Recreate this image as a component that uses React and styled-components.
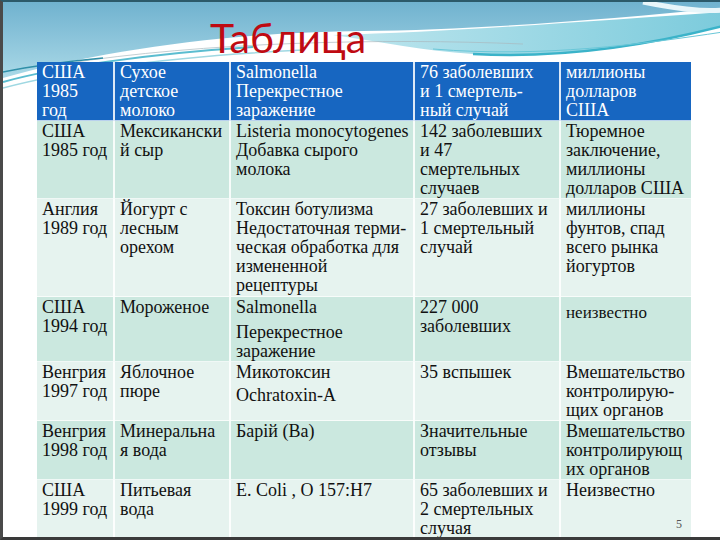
import React from 'react';
import styled, { createGlobalStyle } from 'styled-components';

const Global = createGlobalStyle`
  html, body { margin: 0; padding: 0; background: #fff; }
`

const Slide = styled.div`
  position: relative;
  width: 720px;
  height: 540px;
  box-sizing: border-box;
  background: #fff;
  border-top: 2px solid #2c5a6a;
  border-left: 3px solid #4a4a4a;
  border-bottom: 3px solid #3a3a3a;
  overflow: hidden;
`

const Wave = styled.svg`
  position: absolute;
  top: 0;
  left: 0;
  width: 720px;
  height: 90px;
`

const Title = styled.h1`
  position: relative;
  margin: 0;
  padding: 15px 0 0 207px;
  height: 42px;
  font-family: Lato, "Liberation Sans", sans-serif;
  font-weight: 400;
  font-size: 41px;
  line-height: 42px;
  color: #bf0a12;
`

const Table = styled.table`
  position: relative;
  margin: 3px 0 0 34px;
  width: 654px;
  table-layout: fixed;
  border-collapse: collapse;
  font-family: "Liberation Serif", "Times New Roman", serif;
  font-size: 18px;
  line-height: 19px;
  color: #111;
`

const Row = styled.tr`
  height: ${p => p.h}px;
  background: ${p => (p.head ? '#1766c1' : p.alt ? '#e6f3ef' : '#cbe8df')};
  color: ${p => (p.head ? '#fff' : '#111')};
`

const Cell = styled.td`
  vertical-align: top;
  padding: 1px 0 0 5px;
  border-right: 2px solid rgba(255, 255, 255, 0.85);
  border-bottom: 1px solid rgba(255, 255, 255, 0.7);
  white-space: nowrap;
  overflow: visible;
  &:last-child { border-right: none; }
`

const Para = styled.div`
  margin-top: ${p => p.gap || 0}px;
`

const Small = styled.div`
  margin-top: 5px;
  font-size: 17px;
`

const PageNum = styled.div`
  position: absolute;
  right: 38px;
  bottom: 5px;
  font-family: "Liberation Serif", serif;
  font-size: 12px;
  color: #555;
`

const rows = [
  { h: 56, head: true, cells: [
    ['США', '1985', 'год'],
    ['Сухое', 'детское', 'молоко'],
    ['Salmonella', 'Перекрестное', 'заражение'],
    ['76 заболевших', 'и 1 смертель-', 'ный случай'],
    ['миллионы', 'долларов', 'США'],
  ]},
  { h: 77, cells: [
    ['США', '1985 год'],
    ['Мексикански', 'й сыр'],
    ['Listeria monocytogenes', 'Добавка сырого', 'молока'],
    ['142 заболевших', 'и 47', 'смертельных', 'случаев'],
    ['Тюремное', 'заключение,', 'миллионы', 'долларов США'],
  ]},
  { h: 98, alt: true, cells: [
    ['Англия', '1989 год'],
    ['Йогурт с', 'лесным', 'орехом'],
    ['Токсин ботулизма', 'Недостаточная терми-', 'ческая обработка для', 'измененной', 'рецептуры'],
    ['27 заболевших и', '1 смертельный', 'случай'],
    ['миллионы', 'фунтов, спад', 'всего рынка', 'йогуртов'],
  ]},
  { h: 61, cells: [
    ['США', '1994 год'],
    ['Мороженое'],
    { paras: [['Salmonella'], ['Перекрестное', 'заражение']], gap: 6 },
    ['227 000', 'заболевших'],
    { small: 'неизвестно' },
  ]},
  { h: 59, alt: true, cells: [
    ['Венгрия', '1997 год'],
    ['Яблочное', 'пюре'],
    { paras: [['Микотоксин'], ['Ochratoxin-A']], gap: 4 },
    ['35 вспышек'],
    ['Вмешательство', 'контролирую-', 'щих органов'],
  ]},
  { h: 57, cells: [
    ['Венгрия', '1998 год'],
    ['Минеральна', 'я вода'],
    ['Барій (Ba)'],
    ['Значительные', 'отзывы'],
    ['Вмешательство', 'контролирующ', 'их органов'],
  ]},
  { h: 58, alt: true, cells: [
    ['США', '1999 год'],
    ['Питьевая', 'вода'],
    ['E. Coli , O 157:H7'],
    ['65 заболевших и', '2 смертельных', 'случая'],
    ['Неизвестно'],
  ]},
];

const colWidths = [77, 116, 184, 146, 131];

const Lines = ({ lines }) => lines.map((l, i) => <div key={i}>{l}</div>);

const renderCell = (c) => {
  if (Array.isArray(c)) return <Lines lines={c} />;
  if (c.small) return <Small>{c.small}</Small>;
  return c.paras.map((p, i) => (
    <Para key={i} gap={i ? c.gap : 0}><Lines lines={p} /></Para>
  ));
};

const WaveArt = () => (
  <Wave viewBox="0 0 720 90">
    <defs>
      <linearGradient id="sky" x1="0" y1="0" x2="0" y2="1">
        <stop offset="0" stopColor="#70b2cf" />
        <stop offset="1" stopColor="#aad9e7" />
      </linearGradient>
      <linearGradient id="band" x1="0" y1="0" x2="1" y2="0">
        <stop offset="0" stopColor="#bfe6ee" />
        <stop offset="1" stopColor="#7ccbdc" />
      </linearGradient>
    </defs>
    <path d="M0,0 H720 V6 C600,18 470,28 360,29 C230,30 100,48 0,76 Z" fill="url(#sky)" />
    <path d="M330,33 C450,30 600,18 720,10 V24 C640,46 560,56 470,52 C420,49 380,40 330,33 Z" fill="url(#band)" />
    <path d="M640,0 C670,6 700,10 720,8" stroke="#e8f6fa" strokeWidth="5" fill="none" />
    <path d="M470,52 C560,57 650,42 720,24" stroke="#3bb3c9" strokeWidth="2.5" fill="none" />
    <path d="M430,47 C540,56 640,42 720,30" stroke="#69c7d8" strokeWidth="1" fill="none" />
    <path d="M0,80 C50,66 140,52 250,45" stroke="#5bbdd0" strokeWidth="2" fill="none" />
    <path d="M0,86 C60,70 160,55 300,48" stroke="#9fd8e2" strokeWidth="1.5" fill="none" />
    <path d="M60,62 C200,40 380,36 520,42" stroke="#a9b9bf" strokeWidth="1" fill="none" opacity="0.7" />
    <path d="M0,70 C30,64 60,60 100,56" stroke="#2f8fa8" strokeWidth="1.5" fill="none" />
  </Wave>
);

const App = () => (
  <>
    <Global />
    <Slide>
      <WaveArt />
      <Title>Таблица</Title>
      <Table>
        <colgroup>
          {colWidths.map((w, i) => <col key={i} style={{ width: w }} />)}
        </colgroup>
        <tbody>
          {rows.map((r, i) => (
            <Row key={i} h={r.h} head={r.head} alt={r.alt}>
              {r.cells.map((c, j) => <Cell key={j}>{renderCell(c)}</Cell>)}
            </Row>
          ))}
        </tbody>
      </Table>
      <PageNum>5</PageNum>
    </Slide>
  </>
);

export default App;
